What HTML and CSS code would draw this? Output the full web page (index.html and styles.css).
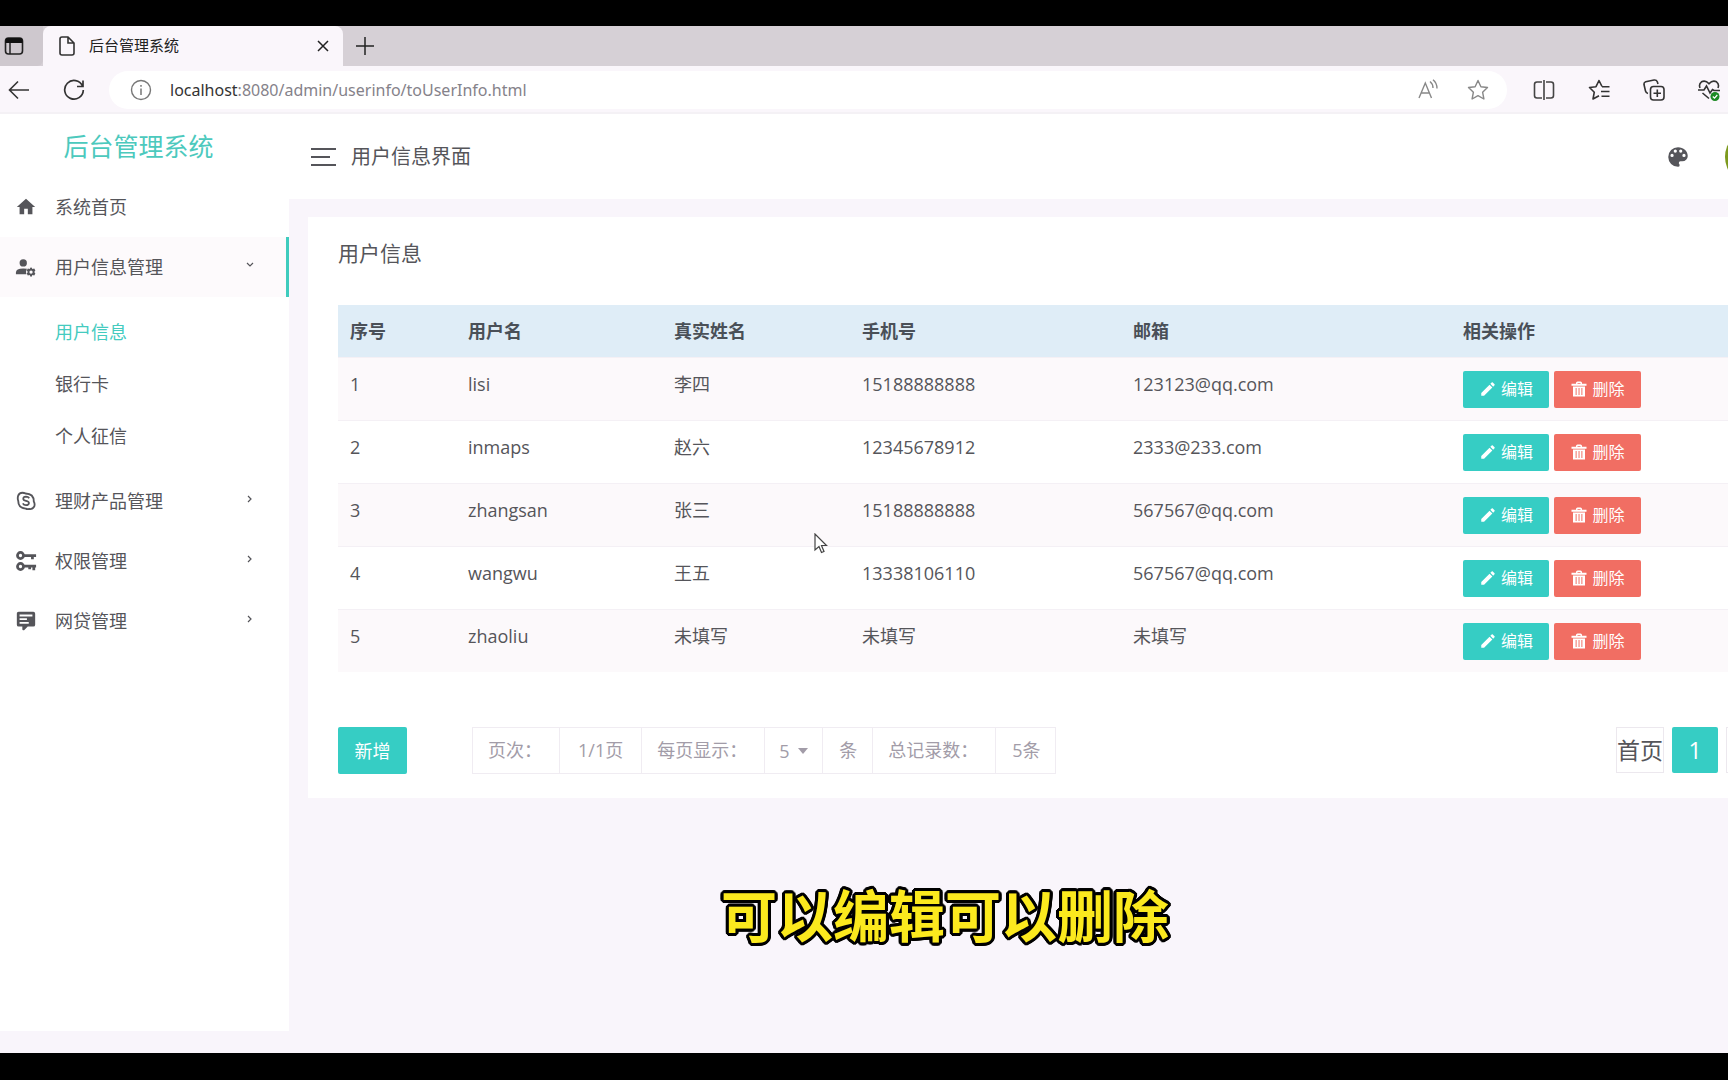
FILE: index.html
```html
<!DOCTYPE html>
<html lang="zh-CN">
<head>
<meta charset="utf-8">
<title>后台管理系统</title>
<link rel="stylesheet" href="styles.css">
</head>
<body>
<svg class="sprite" aria-hidden="true">
  <symbol id="pencil" viewBox="0 0 24 24"><path d="M20.71,7.04C21.1,6.65 21.1,6 20.71,5.63L18.37,3.29C18,2.9 17.35,2.9 16.96,3.29L15.12,5.12L18.87,8.87M3,17.25V21H6.75L17.81,9.93L14.06,6.18L3,17.25Z"/></symbol>
  <symbol id="trash" viewBox="0 0 24 24"><path fill-rule="evenodd" d="M2,5H8V4Q8,2 10,2H14Q16,2 16,4V5H22V7.500H2ZM10,5H14V4H10ZM4,8.500H20V22H4ZM7.500,10.500V20H8.800V10.500ZM11.400,10.500V20H12.700V10.500ZM15.200,10.500V20H16.500V10.500Z"/></symbol>
  <symbol id="chevron" viewBox="0 0 10 10"><path d="M3,2L6,5L3,8" fill="none" stroke="currentColor" stroke-width="1.200"/></symbol>
</svg>
<div class="screen">
  <header class="browser">
    <div class="tabs">
      <button class="tab-menu" aria-label="标签页菜单">
        <svg class="icon" viewBox="0 0 20 20"><rect x="1.500" y="2" width="17" height="16" rx="3" fill="none" stroke="#222" stroke-width="1.600"/><path d="M1.500,7V4Q1.500,2 4,2H16Q18.500,2 18.500,4V7Z" fill="#111"/><path d="M6,7V18" stroke="#222" stroke-width="1.500"/></svg>
      </button>
      <div class="tab">
        <svg class="icon" viewBox="0 0 20 20"><path d="M5,1H11L17,7V17Q17,19 15,19H5Q3,19 3,17V3Q3,1 5,1ZM11,1V7H17" fill="none" stroke="#333" stroke-width="1.600"/></svg>
        <span class="tab-title">后台管理系统</span>
        <button class="tab-close" aria-label="关闭"><svg viewBox="0 0 12 12"><path d="M1,1L11,11M11,1L1,11" stroke="#222" stroke-width="1.500"/></svg></button>
      </div>
      <button class="tab-new" aria-label="新标签页"><svg viewBox="0 0 18 18"><path d="M9,0V18M0,9H18" stroke="#222" stroke-width="1.500"/></svg></button>
    </div>
    <div class="toolbar">
      <button class="tool" aria-label="后退"><svg viewBox="0 0 22 22"><path d="M21,11H2M10,2.500L1.500,11L10,19.500" fill="none" stroke="#333" stroke-width="1.600"/></svg></button>
      <button class="tool" aria-label="刷新"><svg viewBox="0 0 22 22"><path d="M19.500,7A9.300,9.300 0 1 0 20.300,11M20,1.500V7.500H14" fill="none" stroke="#333" stroke-width="1.700"/></svg></button>
      <div class="address">
        <svg class="tool-icon" viewBox="0 0 22 22"><circle cx="11" cy="11" r="9.500" fill="none" stroke="#777" stroke-width="1.400"/><path d="M11,9.500V16M11,6V7.800" stroke="#777" stroke-width="1.500"/></svg>
        <p class="url"><span class="host">localhost</span>:8080/admin/userinfo/toUserInfo.html</p>
        <button class="tool" aria-label="朗读"><svg viewBox="0 0 22 22"><path d="M2,19L8.300,4L14.500,19M4.200,14H12.300M13,2.500Q16,5 16,9M16,0.800Q20,4 20,9.500" fill="none" stroke="#888" stroke-width="1.400"/></svg></button>
        <button class="tool" aria-label="收藏"><svg viewBox="0 0 22 22"><path d="M11,1.500L13.900,7.700L20.500,8.500L15.600,13.200L16.900,20L11,16.700L5.100,20L6.400,13.200L1.500,8.500L8.100,7.700Z" fill="none" stroke="#888" stroke-width="1.400" stroke-linejoin="round"/></svg></button>
      </div>
      <div class="tools">
        <button class="tool" aria-label="分屏"><svg viewBox="0 0 22 22"><path d="M9,3H4Q1.500,3 1.500,5.500V16.500Q1.500,19 4,19H9M13,3H18Q20.500,3 20.500,5.500V16.500Q20.500,19 18,19H13M11,1V21" fill="none" stroke="#444" stroke-width="1.600"/></svg></button>
        <button class="tool" aria-label="收藏夹"><svg viewBox="0 0 22 22"><path d="M14,7.500L11,1.500L8,7.700L1.500,8.500L6.300,13.200L5,20L11,16.700M14,7.800H21.500M13,12.500H21.500M13.500,17.200H21.500" fill="none" stroke="#333" stroke-width="1.600" stroke-linejoin="round"/></svg></button>
        <button class="tool" aria-label="集锦"><svg viewBox="0 0 22 22"><rect x="7.500" y="7.500" width="13.500" height="13.500" rx="3" fill="none" stroke="#333" stroke-width="1.600"/><path d="M14.300,10.500V18M10.500,14.300H18M5,14.500Q3,14 2.500,12L1,5.500Q0.700,3.500 2.700,2.800L11,1Q13.500,0.700 14.300,2.700L15,5" fill="none" stroke="#333" stroke-width="1.600"/></svg></button>
        <button class="tool" aria-label="浏览器概要"><svg viewBox="0 0 22 22"><path d="M2,9Q0.500,5 3.500,2.800Q7.500,0.800 11,4.800Q14.500,0.800 18.500,2.800Q21.500,5 20,9M0,11H6L8.500,7L12,14L14.500,10.500L16,11.500H22M4.500,14L11,19.500" fill="none" stroke="#333" stroke-width="1.600"/><circle cx="17" cy="17.500" r="4.500" fill="#1c8a24"/><path d="M14.800,17.500L16.500,19.200L19.300,16" fill="none" stroke="#fff" stroke-width="1.200"/></svg></button>
      </div>
    </div>
  </header>

  <div class="app">
    <aside class="sidebar">
      <h1 class="brand">后台管理系统</h1>
      <nav>
        <ul class="menu">
          <li><a class="item" href="#"><svg class="nav-icon" viewBox="0 0 24 24"><path d="M10,20V14H14V20H19V12H22L12,3L2,12H5V20H10Z"/></svg>系统首页</a></li>
          <li>
            <a class="item open" href="#"><svg class="nav-icon" viewBox="0 0 24 24"><circle cx="9" cy="7.500" r="4"/><path d="M1,20V18Q1,13.500 9,13.500Q11.500,13.500 13,14Q11.500,17 12.500,20Z"/><path d="M18,12.500L19,14.300L21,13.700L22.200,15.800L21,17.500L22.200,19.200L21,21.300L19,20.700L18,22.500H17L16,20.700L14,21.300L12.800,19.200L14,17.500L12.800,15.800L14,13.700L16,14.300L17,12.500ZM17.500,15.700A1.800,1.800 0 1 0 17.501,19.300A1.800,1.800 0 1 0 17.500,15.700Z" fill-rule="evenodd"/></svg>用户信息管理<svg class="arrow down" viewBox="0 0 10 10"><use href="#chevron"/></svg></a>
            <ul class="submenu">
              <li><a class="sub current" href="#">用户信息</a></li>
              <li><a class="sub" href="#">银行卡</a></li>
              <li><a class="sub" href="#">个人征信</a></li>
            </ul>
          </li>
          <li><a class="item" href="#"><svg class="nav-icon" viewBox="0 0 24 24"><path d="M8,3Q10,3 11.500,3.800Q20.500,4 20.500,12.500Q22,15 21,18Q19,21.500 15.500,20.700Q13,21 11.800,20.300Q3.500,20 3.500,11.800Q2.500,9 3.500,6Q5,3 8,3Z" fill="none" stroke="currentColor" stroke-width="2"/><path d="M15.500,9Q14.500,7.300 12,7.300Q9,7.500 9,9.500Q9,11.200 12,11.800Q15.300,12.500 15.200,14.300Q15,16.500 12,16.500Q9.500,16.500 8.500,14.500" fill="none" stroke="currentColor" stroke-width="1.900"/></svg>理财产品管理<svg class="arrow" viewBox="0 0 10 10"><use href="#chevron"/></svg></a></li>
          <li><a class="item" href="#"><svg class="nav-icon" viewBox="0 0 24 24"><g fill="none" stroke="currentColor" stroke-width="3"><circle cx="6" cy="6" r="3.300"/><path d="M9.500,6H23M19,6V10"/><circle cx="6" cy="18" r="3.300"/><path d="M9.500,17.500H23M20.500,17.500V22M16,17.500V21"/></g></svg>权限管理<svg class="arrow" viewBox="0 0 10 10"><use href="#chevron"/></svg></a></li>
          <li><a class="item" href="#"><svg class="nav-icon" viewBox="0 0 24 24"><path d="M9,22A1,1 0 0,1 8,21V18H4A2,2 0 0,1 2,16V4C2,2.890 2.900,2 4,2H20A2,2 0 0,1 22,4V16A2,2 0 0,1 20,18H13.900L10.200,21.710C10,21.900 9.750,22 9.500,22H9M5,5V7H19V5H5M5,9V11H13V9H5M5,13V15H15V13H5Z"/></svg>网贷管理<svg class="arrow" viewBox="0 0 10 10"><use href="#chevron"/></svg></a></li>
        </ul>
      </nav>
    </aside>

    <div class="content">
      <div class="topbar">
        <button class="burger" aria-label="折叠菜单"><span></span><span></span><span></span></button>
        <h2 class="page-title">用户信息界面</h2>
        <button class="theme" aria-label="主题"><svg viewBox="0 0 24 24"><path d="M17.500,12A1.500,1.500 0 0,1 16,10.500A1.500,1.500 0 0,1 17.500,9A1.500,1.500 0 0,1 19,10.500A1.500,1.500 0 0,1 17.500,12M14.500,8A1.500,1.500 0 0,1 13,6.500A1.500,1.500 0 0,1 14.500,5A1.500,1.500 0 0,1 16,6.500A1.500,1.500 0 0,1 14.500,8M9.500,8A1.500,1.500 0 0,1 8,6.500A1.500,1.500 0 0,1 9.500,5A1.500,1.500 0 0,1 11,6.500A1.500,1.500 0 0,1 9.500,8M6.500,12A1.500,1.500 0 0,1 5,10.500A1.500,1.500 0 0,1 6.500,9A1.500,1.500 0 0,1 8,10.500A1.500,1.500 0 0,1 6.500,12M12,3A9,9 0 0,0 3,12A9,9 0 0,0 12,21A1.500,1.500 0 0,0 13.500,19.500C13.500,19.110 13.350,18.760 13.110,18.500C12.880,18.230 12.730,17.880 12.730,17.500A1.500,1.500 0 0,1 14.230,16H16A5,5 0 0,0 21,11C21,6.580 16.970,3 12,3Z"/></svg></button>
        <div class="avatar-clip"><span class="avatar"></span></div>
      </div>

      <main class="card">
        <h3 class="card-title">用户信息</h3>
        <table class="users">
          <colgroup><col class="c-no"><col class="c-user"><col class="c-name"><col class="c-phone"><col class="c-mail"><col></colgroup>
          <thead><tr><th>序号</th><th>用户名</th><th>真实姓名</th><th>手机号</th><th>邮箱</th><th>相关操作</th></tr></thead>
          <tbody>
            <tr><td>1</td><td>lisi</td><td>李四</td><td>15188888888</td><td>123123@qq.com</td><td><div class="actions"><button class="btn edit"><svg><use href="#pencil"/></svg>编辑</button><button class="btn delete"><svg><use href="#trash"/></svg>删除</button></div></td></tr>
            <tr><td>2</td><td>inmaps</td><td>赵六</td><td>12345678912</td><td>2333@233.com</td><td><div class="actions"><button class="btn edit"><svg><use href="#pencil"/></svg>编辑</button><button class="btn delete"><svg><use href="#trash"/></svg>删除</button></div></td></tr>
            <tr><td>3</td><td>zhangsan</td><td>张三</td><td>15188888888</td><td>567567@qq.com</td><td><div class="actions"><button class="btn edit"><svg><use href="#pencil"/></svg>编辑</button><button class="btn delete"><svg><use href="#trash"/></svg>删除</button></div></td></tr>
            <tr><td>4</td><td>wangwu</td><td>王五</td><td>13338106110</td><td>567567@qq.com</td><td><div class="actions"><button class="btn edit"><svg><use href="#pencil"/></svg>编辑</button><button class="btn delete"><svg><use href="#trash"/></svg>删除</button></div></td></tr>
            <tr><td>5</td><td>zhaoliu</td><td>未填写</td><td>未填写</td><td>未填写</td><td><div class="actions"><button class="btn edit"><svg><use href="#pencil"/></svg>编辑</button><button class="btn delete"><svg><use href="#trash"/></svg>删除</button></div></td></tr>
          </tbody>
        </table>
        <div class="footer">
          <button class="add">新增</button>
          <div class="summary">
            <span class="cell label">页次：</span><span class="cell pages">1/1页</span>
            <label class="cell label" for="size">每页显示：</label>
            <span class="cell size-cell"><select id="size" class="size"><option>5</option><option>10</option></select><svg class="caret" viewBox="0 0 10 6"><path d="M0,0H10L5,6Z"/></svg></span>
            <span class="cell">条</span><span class="cell label">总记录数：</span><span class="cell">5条</span>
          </div>
          <nav class="pager" aria-label="分页"><a class="page first" href="#">首页</a><a class="page active" href="#">1</a><a class="page" href="#" aria-label="尾页"></a></nav>
        </div>
      </main>
    </div>
  </div>
  <p class="caption">可以编辑可以删除</p>
  <svg class="cursor" viewBox="0 0 14 21"><path d="M1,1V17L5,13.500L7.500,19.500L10,18.500L7.500,12.500H12.500Z" fill="#fff" stroke="#444" stroke-width="1.200"/></svg>
</div>
</body>
</html>
```

FILE: styles.css
```css
* { box-sizing: border-box; }
body {
  margin: 0;
  background: #000;
  color: #55555a;
  font-family: "Open Sans", "Noto Sans CJK SC", sans-serif;
  font-size: 18px;
  line-height: 26px;
}
h1, h2, h3, p, ul { margin: 0; padding: 0; font-weight: 400; }
ul { list-style: none; }
a { color: inherit; text-decoration: none; }
button { padding: 0; border: 0; background: none; color: inherit; font: inherit; }
svg { display: block; flex: none; fill: currentColor; }
.sprite { position: absolute; width: 0; height: 0; }

.screen {
  position: relative;
  display: flex;
  flex-direction: column;
  min-height: 100vh;
  padding: 26px 0 27px;
  overflow: hidden;
}

/* browser window */
.tabs { display: flex; height: 40px; background: #d6d0d6; }
.tab-menu { display: flex; align-items: center; width: 43px; padding-left: 4px; background: #cec8ce; border-radius: 0 0 6px 0; }
.icon { width: 20px; height: 20px; }
.tab {
  display: flex;
  align-items: center;
  width: 300px;
  padding: 0 14px;
  border-radius: 8px 8px 0 0;
  background: #faf6fb;
}
.tab-title { flex: 1; padding: 0 0 2px 12px; color: #222; font-size: 15px; line-height: 20px; }
.tab-close svg { width: 12px; height: 12px; }
.tab-new { padding-left: 13px; }
.tab-new svg { width: 18px; height: 18px; }
.toolbar {
  display: flex;
  align-items: center;
  gap: 33px;
  height: 48px;
  padding: 2px 8px 0;
  border-bottom: 2px solid #f4f1f5;
  background: #faf6fb;
}
.tool svg, .tool-icon { width: 22px; height: 22px; }
.address {
  display: flex;
  flex: 1;
  align-items: center;
  gap: 28px;
  height: 38px;
  margin: 0 -7px 0 -9px;
  padding: 0 18px 0 21px;
  border-radius: 19px;
  background: #fff;
}
.url { flex: 1; margin-left: -10px; color: #85828a; font-family: "Noto Sans", sans-serif; font-size: 16px; }
.host { color: #333; }
.tools { display: flex; gap: 33px; }

/* application */
.app { display: flex; flex: 1; background: #f9f5fb; }
.sidebar { width: 289px; margin-bottom: 22px; background: #fff; }
.brand { padding: 14px 0 13px; color: #4cc9bd; font-size: 25px; line-height: 36px; text-align: center; text-indent: -12px; }
.item { display: flex; align-items: center; height: 60px; padding: 0 34px 0 15px; }
.item.open { border-right: 3px solid #3fccbe; padding-right: 31px; background: #fdfafc; }
.nav-icon { width: 22px; height: 22px; margin-right: 18px; }
.arrow { width: 10px; height: 10px; margin: 0 0 5px auto; }
.arrow.down { transform: rotate(90deg); }
.submenu { padding: 9px 0; }
.sub { display: flex; align-items: center; height: 52px; padding-left: 55px; }
.current { color: #45cbbf; }

.content { display: flex; flex: 1; flex-direction: column; min-width: 0; }
.topbar { display: flex; align-items: center; height: 85px; padding-left: 22px; background: #fff; }
.burger { display: flex; flex-direction: column; gap: 6px; width: 25px; }
.burger span { width: 25px; height: 2px; background: #55555a; }
.burger span:nth-child(2) { width: 19px; }
.page-title { flex: 1; padding-left: 15px; font-size: 20px; }
.theme svg { width: 26px; height: 26px; }
.avatar-clip { width: 3px; height: 56px; margin-left: 34px; overflow: hidden; }
.avatar { display: block; width: 56px; height: 56px; border-radius: 50%; background: #7d9a1e; }

.card { margin: 18px 0 0 19px; padding: 0 0 24px 30px; background: #fff; }
.card-title { padding: 22px 0 38px; font-size: 21px; line-height: 28px; }
.users { width: 100%; table-layout: fixed; border-collapse: collapse; }
.c-no { width: 118px; }
.c-user { width: 206px; }
.c-name { width: 188px; }
.c-phone { width: 271px; }
.c-mail { width: 330px; }
.users th { height: 52px; padding: 0 12px; background: #dfedf7; color: #4a5058; font-weight: 700; text-align: left; }
.users td { height: 63px; padding: 13px 12px 0; border-top: 1px solid #f4f0f5; vertical-align: top; }
.users tbody tr:nth-child(odd) { background: #fcf9fb; }
.actions { display: flex; gap: 5px; }
.btn {
  display: flex;
  align-items: center;
  justify-content: center;
  gap: 4px;
  width: 86px;
  height: 37px;
  border-radius: 2px;
  color: #fff;
  font-size: 16px;
}
.btn svg { width: 18px; height: 18px; }
.edit { background: #36cdc4; }
.delete { width: 87px; background: #f16e63; }

.footer { display: flex; align-items: flex-start; padding-top: 55px; }
.add { width: 69px; height: 47px; border-radius: 2px; background: #36cdc4; color: #fff; }
.summary { display: flex; height: 47px; margin-left: 65px; border: 1px solid #f0ecf2; color: #a29ca8; }
.cell { display: flex; align-items: center; padding: 0 15px 1px 16px; }
.cell + .cell { border-left: 1px solid #f0ecf2; }
.label { padding: 0 17px 1px 15px; }
.pages { padding: 0 18px 1px; }
.size-cell { gap: 4px; padding: 0 14px; }
.size {
  width: 15px;
  height: 44px;
  padding: 0;
  border: 0;
  background: none;
  appearance: none;
  color: inherit;
  font: inherit;
}
.caret { width: 10px; height: 6px; pointer-events: none; }
.pager { display: flex; gap: 8px; width: 112px; margin-left: auto; overflow: hidden; font-size: 23px; }
.page { display: flex; flex: none; align-items: center; justify-content: center; width: 46px; height: 46px; padding-bottom: 1px; border: 1px solid #ece8ee; }
.first { width: 48px; }
.active { border: 0; border-radius: 2px; background: #36cdc4; color: #fff; }

/* over the page */
.caption {
  position: absolute;
  top: 875px;
  left: 0;
  width: 100%;
  padding-left: 162px;
  color: #fbe91e;
  font-size: 56px;
  font-weight: 700;
  line-height: 80px;
  text-align: center;
  text-shadow:
    3px 0 #000, -3px 0 #000, 0 3px #000, 0 -3px #000,
    3px 1px #000, 3px -1px #000, -3px 1px #000, -3px -1px #000,
    1px 3px #000, -1px 3px #000, 1px -3px #000, -1px -3px #000,
    2px 2px #000, 2px -2px #000, -2px 2px #000, -2px -2px #000;
}
.cursor { position: absolute; top: 533px; left: 814px; width: 14px; height: 21px; }
```
